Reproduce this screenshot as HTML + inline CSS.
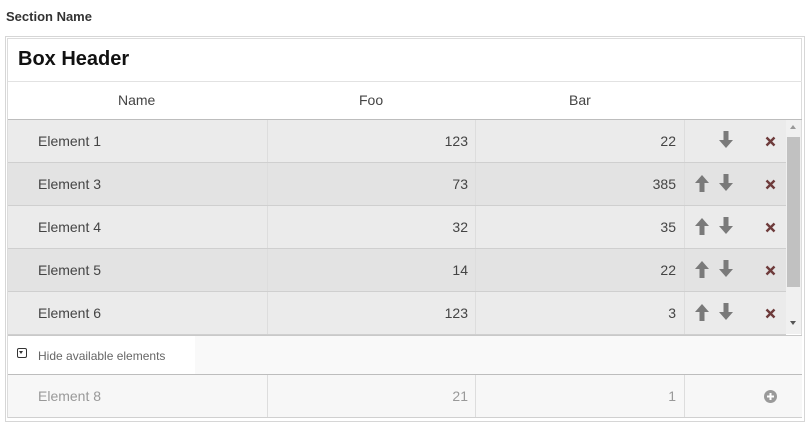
<!DOCTYPE html>
<html><head><style>
body{margin:0;width:809px;height:436px;background:#fff;font-family:"Liberation Sans",sans-serif;position:relative;overflow:hidden}
.abs{position:absolute}
.sec{left:6px;top:9px;font-size:13px;font-weight:bold;color:#333}
.outer{left:5px;top:36px;width:798px;height:384px;border:1px solid #d6d6d6}
.inner{left:7px;top:38px;width:795px;height:380px;border:1px solid #dcdcdc;box-sizing:border-box}
.bh{left:18px;top:48px;font-size:20px;font-weight:bold;color:#111}
.line{height:1px;left:8px;width:794px}
.hd{top:92px;font-size:14px;color:#444}
.row{left:8px;width:778px;height:42px;font-size:14px;color:#444}
.row div{position:absolute;top:0;height:42px;line-height:42px}
.c1{left:30px}
.c2{left:259px;width:200px;text-align:right;border-left:1px solid #ddd;padding-right:0}
.c3{left:467px;width:200px;text-align:right;border-left:1px solid #ddd}
.c4{left:676px;width:102px;border-left:1px solid #ddd}
svg{position:absolute}
</style></head><body>
<div class="abs sec">Section Name</div>
<div class="abs outer"></div>
<div class="abs inner"></div>
<div class="abs bh">Box Header</div>
<div class="abs line" style="top:81px;background:#e2e2e2"></div>
<div class="abs hd" style="left:118px">Name</div>
<div class="abs hd" style="left:359px">Foo</div>
<div class="abs hd" style="left:569px">Bar</div>
<div class="abs line" style="top:119px;background:#bdbdbd"></div>
<div class="abs" style="left:786px;top:120px;width:15px;height:214px;background:#f0f0f0"></div>
<div class="abs" style="left:787px;top:137px;width:13px;height:150px;background:#c1c1c1"></div>
<div class="abs" style="left:790px;top:125px;width:0;height:0;border:3.5px solid transparent;border-bottom:4px solid #999;border-top:0"></div>
<div class="abs" style="left:790px;top:321px;width:0;height:0;border:3.5px solid transparent;border-top:4px solid #555;border-bottom:0"></div>

<div id="rows"></div>
<script>
var d=[["Element 1","123","22",0,"#ebebeb"],["Element 3","73","385",1,"#e3e3e3"],["Element 4","32","35",1,"#ebebeb"],["Element 5","14","22",1,"#e3e3e3"],["Element 6","123","3",1,"#ebebeb"]];
var up='<svg width="14" height="17" viewBox="0 0 14 17" style="left:10px;top:12px"><path d="M7 0L14 8H9.5V17H4.5V8H0Z" fill="#7a7a7a"/></svg>';
var dn='<svg width="14" height="17" viewBox="0 0 14 17" style="left:34px;top:11px"><path d="M7 17L14 9H9.5V0H4.5V9H0Z" fill="#7a7a7a"/></svg>';
var x='<svg width="11" height="11" viewBox="0 0 11 11" style="left:80px;top:16px"><path d="M1.5 1.5L9.5 9.5M9.5 1.5L1.5 9.5" stroke="#6e3b3b" stroke-width="2.4"/></svg>';
var h='';
d.forEach(function(r,i){var t=120+i*43;
h+='<div class="abs row" style="top:'+t+'px;background:'+r[4]+'"><div class="c1">'+r[0]+'</div><div class="c2">'+r[1]+'</div><div class="c3">'+r[2]+'</div><div class="c4">'+(r[3]?up:'')+dn+x+'</div></div>';
h+='<div class="abs" style="left:8px;width:778px;height:1px;top:'+(t+42)+'px;background:#cfcfcf"></div>';});
document.getElementById('rows').innerHTML=h;
</script>
<div class="abs line" style="top:335px;background:#c9c9c9"></div>
<div class="abs" style="left:8px;top:336px;width:794px;height:38px;background:#f9f9f9"></div>
<div class="abs" style="left:8px;top:336px;width:187px;height:38px;background:#fff"></div>
<div class="abs" style="left:17px;top:348px;width:8px;height:8px;border:1px solid #333;border-radius:2px"></div>
<div class="abs" style="left:19px;top:351px;width:0;height:0;border:2.5px solid transparent;border-top:3px solid #333;border-bottom:0"></div>
<div class="abs" style="left:38px;top:349px;font-size:12px;color:#666">Hide available elements</div>
<div class="abs line" style="top:374px;background:#bdbdbd"></div>
<div class="abs row" style="top:375px;width:794px;background:#f7f7f7;color:#999"><div class="c1">Element 8</div><div class="c2">21</div><div class="c3">1</div><div class="c4"><svg width="13" height="13" viewBox="0 0 13 13" style="left:79px;top:15px"><circle cx="6.5" cy="6.5" r="6.5" fill="#9a9a9a"/><path d="M6.5 3V10M3 6.5H10" stroke="#fff" stroke-width="2"/></svg></div></div>
<div class="abs line" style="top:417px;background:#d0d0d0"></div>
</body></html>
